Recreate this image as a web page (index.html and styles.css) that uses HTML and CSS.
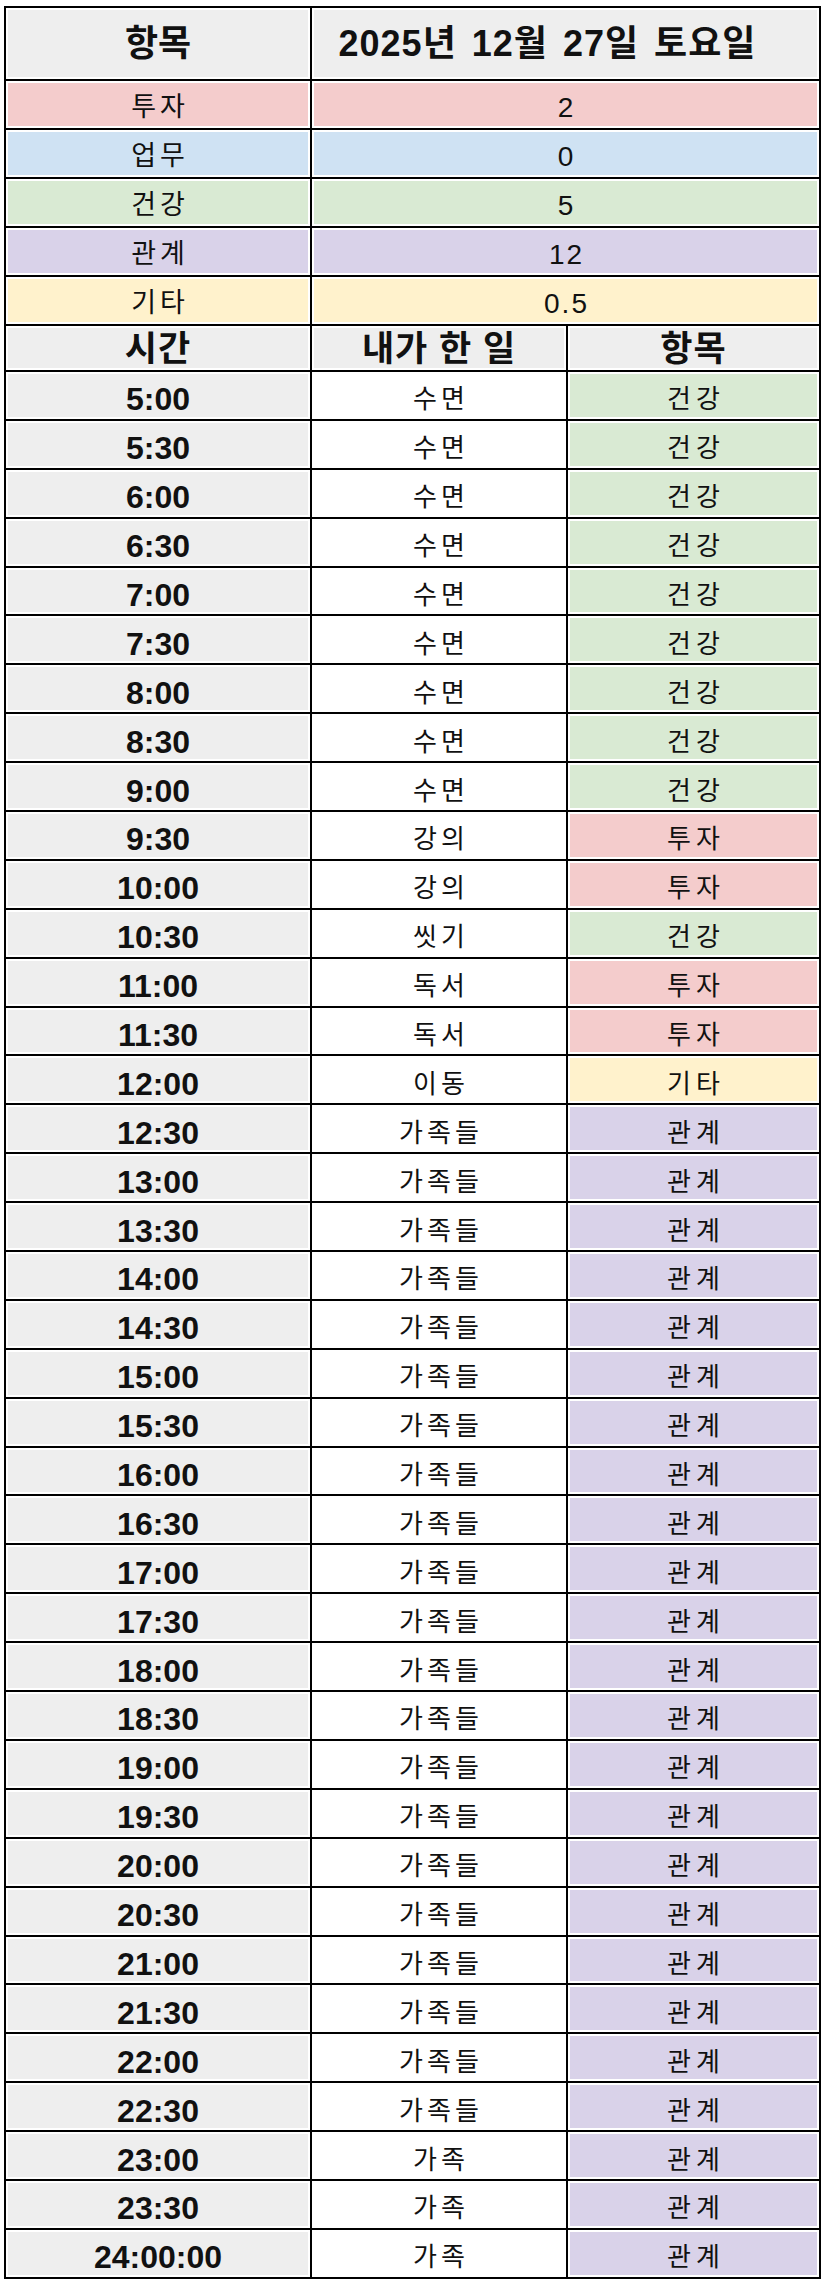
FILE: index.html
```html
<!DOCTYPE html>
<html lang="ko">
<head>
<meta charset="utf-8">
<title>2025년 12월 27일 토요일</title>
<link rel="stylesheet" href="styles.css">
</head>
<body>
<div class="sheet">
  <div class="summary">
    <div class="cell head">항목</div>
    <div class="cell head date">2025년 12월 27일 토요일</div>
    <div class="cell label invest">투자</div><div class="cell num invest">2</div>
    <div class="cell label work">업무</div><div class="cell num work">0</div>
    <div class="cell label health">건강</div><div class="cell num health">5</div>
    <div class="cell label relation">관계</div><div class="cell num relation">12</div>
    <div class="cell label etc">기타</div><div class="cell num etc">0.5</div>
  </div>
  <div class="log">
    <div class="cell colhead">시간</div>
    <div class="cell colhead">내가 한 일</div>
    <div class="cell colhead">항목</div>

    <div class="cell time">5:00</div><div class="cell task">수면</div><div class="cell kind health">건강</div>
    <div class="cell time">5:30</div><div class="cell task">수면</div><div class="cell kind health">건강</div>
    <div class="cell time">6:00</div><div class="cell task">수면</div><div class="cell kind health">건강</div>
    <div class="cell time">6:30</div><div class="cell task">수면</div><div class="cell kind health">건강</div>
    <div class="cell time">7:00</div><div class="cell task">수면</div><div class="cell kind health">건강</div>
    <div class="cell time">7:30</div><div class="cell task">수면</div><div class="cell kind health">건강</div>
    <div class="cell time">8:00</div><div class="cell task">수면</div><div class="cell kind health">건강</div>
    <div class="cell time">8:30</div><div class="cell task">수면</div><div class="cell kind health">건강</div>
    <div class="cell time">9:00</div><div class="cell task">수면</div><div class="cell kind health">건강</div>
    <div class="cell time">9:30</div><div class="cell task">강의</div><div class="cell kind invest">투자</div>
    <div class="cell time">10:00</div><div class="cell task">강의</div><div class="cell kind invest">투자</div>
    <div class="cell time">10:30</div><div class="cell task">씻기</div><div class="cell kind health">건강</div>
    <div class="cell time">11:00</div><div class="cell task">독서</div><div class="cell kind invest">투자</div>
    <div class="cell time">11:30</div><div class="cell task">독서</div><div class="cell kind invest">투자</div>
    <div class="cell time">12:00</div><div class="cell task">이동</div><div class="cell kind etc">기타</div>
    <div class="cell time">12:30</div><div class="cell task">가족들</div><div class="cell kind relation">관계</div>
    <div class="cell time">13:00</div><div class="cell task">가족들</div><div class="cell kind relation">관계</div>
    <div class="cell time">13:30</div><div class="cell task">가족들</div><div class="cell kind relation">관계</div>
    <div class="cell time">14:00</div><div class="cell task">가족들</div><div class="cell kind relation">관계</div>
    <div class="cell time">14:30</div><div class="cell task">가족들</div><div class="cell kind relation">관계</div>
    <div class="cell time">15:00</div><div class="cell task">가족들</div><div class="cell kind relation">관계</div>
    <div class="cell time">15:30</div><div class="cell task">가족들</div><div class="cell kind relation">관계</div>
    <div class="cell time">16:00</div><div class="cell task">가족들</div><div class="cell kind relation">관계</div>
    <div class="cell time">16:30</div><div class="cell task">가족들</div><div class="cell kind relation">관계</div>
    <div class="cell time">17:00</div><div class="cell task">가족들</div><div class="cell kind relation">관계</div>
    <div class="cell time">17:30</div><div class="cell task">가족들</div><div class="cell kind relation">관계</div>
    <div class="cell time">18:00</div><div class="cell task">가족들</div><div class="cell kind relation">관계</div>
    <div class="cell time">18:30</div><div class="cell task">가족들</div><div class="cell kind relation">관계</div>
    <div class="cell time">19:00</div><div class="cell task">가족들</div><div class="cell kind relation">관계</div>
    <div class="cell time">19:30</div><div class="cell task">가족들</div><div class="cell kind relation">관계</div>
    <div class="cell time">20:00</div><div class="cell task">가족들</div><div class="cell kind relation">관계</div>
    <div class="cell time">20:30</div><div class="cell task">가족들</div><div class="cell kind relation">관계</div>
    <div class="cell time">21:00</div><div class="cell task">가족들</div><div class="cell kind relation">관계</div>
    <div class="cell time">21:30</div><div class="cell task">가족들</div><div class="cell kind relation">관계</div>
    <div class="cell time">22:00</div><div class="cell task">가족들</div><div class="cell kind relation">관계</div>
    <div class="cell time">22:30</div><div class="cell task">가족들</div><div class="cell kind relation">관계</div>
    <div class="cell time">23:00</div><div class="cell task">가족</div><div class="cell kind relation">관계</div>
    <div class="cell time">23:30</div><div class="cell task">가족</div><div class="cell kind relation">관계</div>
    <div class="cell time">24:00:00</div><div class="cell task">가족</div><div class="cell kind relation">관계</div>
  </div>
</div>
</body>
</html>
```

FILE: styles.css
```css
html, body {
  margin: 0;
  padding: 0;
  background: #ffffff;
}

.sheet {
  box-sizing: border-box;
  width: 817px;
  margin: 6px 0 0 4px;
  padding: 2px;
  background: #000000;
  display: flex;
  flex-direction: column;
  gap: 2px;
}

.summary {
  display: grid;
  grid-template-columns: 304px 507px;
  grid-template-rows: 71px repeat(5, 47px);
  gap: 2px;
}

.log {
  display: grid;
  grid-template-columns: 304px 254px 251px;
  grid-template-rows: 44px repeat(39, 46.9px);
  gap: 2px;
}

.cell {
  box-sizing: border-box;
  display: flex;
  align-items: center;
  justify-content: center;
  background: #ffffff;
  box-shadow: inset 0 0 0 2px #ffffff;
  color: #111111;
  font-family: "Liberation Sans", "Noto Sans CJK KR", sans-serif;
  line-height: 1;
  white-space: nowrap;
}

.head {
  background: #eeeeee;
  font-weight: 700;
  font-size: 36px;
}

.date {
  letter-spacing: 1px;
  word-spacing: 4px;
  padding-right: 36px;
}

.label {
  font-size: 27px;
  letter-spacing: 4px;
  padding-left: 4px;
  padding-top: 5px;
}

.num {
  font-size: 28px;
  letter-spacing: 2px;
  padding-left: 2px;
  padding-top: 7px;
}

.colhead {
  background: #eeeeee;
  font-weight: 700;
  font-size: 35px;
  letter-spacing: 1px;
}

.time {
  background: #eeeeee;
  font-weight: 700;
  font-size: 32px;
  padding-top: 8px;
}

.task {
  font-size: 26px;
  letter-spacing: 4px;
  padding-left: 4px;
  padding-top: 8px;
}

.kind {
  font-size: 26px;
  letter-spacing: 5px;
  padding-left: 5px;
  padding-top: 8px;
}

.invest { background: #f4cccc; }
.work { background: #cfe2f3; }
.health { background: #d9ead3; }
.relation { background: #d9d2e9; }
.etc { background: #fff2cc; }
```
